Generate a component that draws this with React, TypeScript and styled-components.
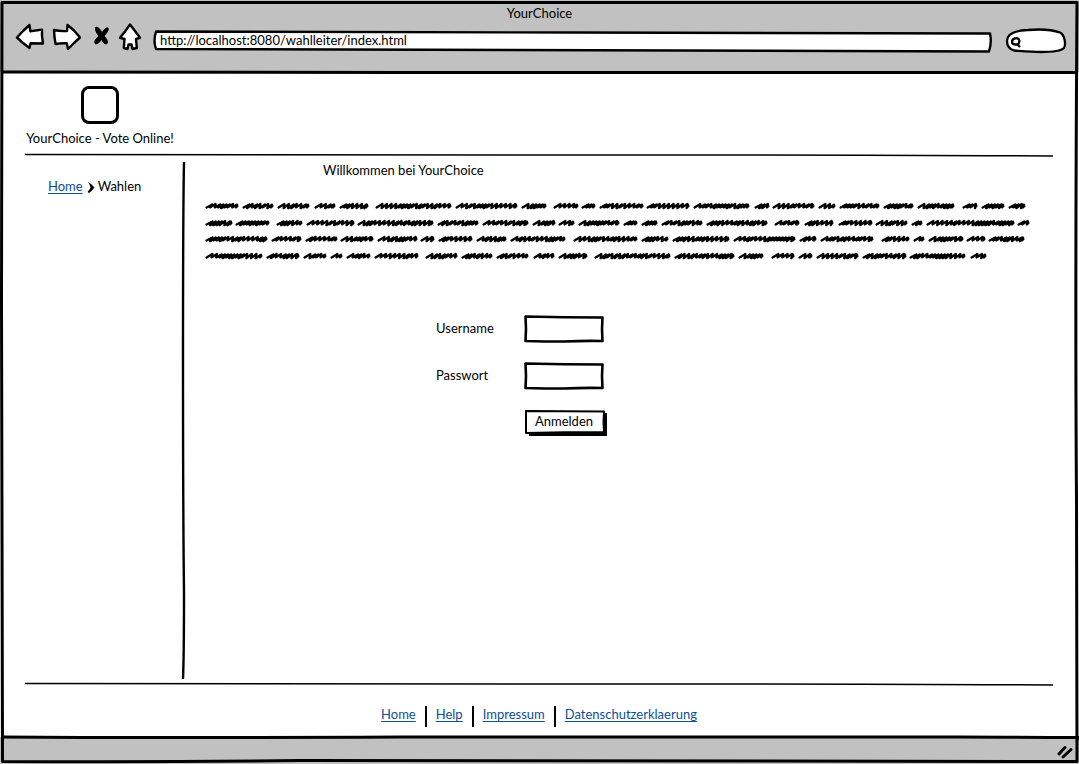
import React from "react";
import styled, { createGlobalStyle } from "styled-components";

const GlobalStyle = createGlobalStyle`
  * { box-sizing: border-box; }
  body {
    margin: 0;
    background: #fff;
    color: #000;
    font-family: Lato, "Open Sans", sans-serif;
    font-size: 13px;
    line-height: 16px;
  }
`;

const Window = styled.div`
  position: relative;
  display: flex;
  flex-direction: column;
  min-height: 100vh;
`;

const Outline = styled.svg`
  position: absolute;
  inset: 0;
  width: 100%;
  height: 100%;
  fill: none;
  stroke: #000;
  pointer-events: none;
  path { vector-effect: non-scaling-stroke; }
`;

const Toolbar = styled.header`
  display: flex;
  flex-direction: column;
  padding-top: 5px;
  background: #c1c1c1;
`;

const WindowTitle = styled.div`
  height: 15px;
  text-align: center;
`;

const NavRow = styled.div`
  display: flex;
  align-items: flex-end;
  padding: 0 12px 15px 14px;
`;

const NavButtons = styled.div`
  display: flex;
  gap: 2px;
  margin-right: 9px;
`;

const IconButton = styled.button`
  display: block;
  padding: 0;
  border: 0;
  background: none;
  svg {
    display: block;
    fill: #fff;
    stroke: #000;
    stroke-width: 2.4;
    stroke-linejoin: round;
    stroke-linecap: round;
  }
`;

const Field = styled.div<{ $width?: number; $height: number }>`
  position: relative;
  flex: ${(p) => (p.$width ? "none" : "1")};
  width: ${(p) => (p.$width ? `${p.$width}px` : "auto")};
  height: ${(p) => p.$height}px;
`;

const TextInput = styled.input<{ $padLeft?: number }>`
  position: relative;
  display: block;
  width: 100%;
  height: 100%;
  padding: 0 6px 4px ${(p) => p.$padLeft ?? 7}px;
  border: 0;
  outline: 0;
  background: transparent;
  color: #000;
  font: inherit;
`;

const SearchSlot = styled.div`
  margin-left: 13px;
`;

const Rule = styled.svg`
  display: block;
  flex: none;
  width: 100%;
  height: 6px;
  fill: none;
  stroke: #000;
  path { vector-effect: non-scaling-stroke; }
`;

const TopRule = styled(Rule)`
  background: linear-gradient(#c1c1c1 50%, #fff 50%);
`;

const BottomRule = styled(Rule)`
  background: linear-gradient(#fff 50%, #c1c1c1 50%);
`;

const Page = styled.div`
  display: flex;
  flex: 1;
  flex-direction: column;
  padding: 0 26px 0 25px;
`;

const Brand = styled.div`
  display: flex;
  flex-direction: column;
  align-items: center;
  gap: 6px;
  width: 150px;
  padding: 11px 0 6px;
  white-space: nowrap;
`;

const Logo = styled.div`
  width: 38px;
  height: 38px;
  border: 3px solid #000;
  border-radius: 8px;
`;

const Columns = styled.div`
  display: flex;
  flex: 1;
`;

const Breadcrumb = styled.nav`
  display: flex;
  align-items: flex-start;
  width: 155px;
  padding: 20px 0 0 23px;
  svg { margin: 4px 3px 0 4px; }
`;

const Link = styled.a`
  color: #0b4f94;
  text-decoration: underline;
  text-decoration-thickness: 1px;
  text-decoration-skip-ink: none;
  text-underline-offset: 2px;
`;

const Divider = styled.div`
  position: relative;
  width: 6px;
  margin: 4px 0 2px;
`;

const Main = styled.main`
  flex: 1;
  padding: 4px 23px 0 19px;
`;

const Heading = styled.h1`
  margin: 0 0 21px;
  padding-left: 118px;
  font-size: 13px;
  font-weight: 400;
  line-height: 16px;
`;

const Scribble = styled.svg`
  display: block;
  width: 100%;
  height: auto;
  fill: none;
  stroke: #000;
  stroke-width: 2.3;
  stroke-linecap: round;
  stroke-linejoin: round;
`;

const LoginForm = styled.form`
  display: grid;
  grid-template-columns: 88px 80px;
  row-gap: 19px;
  align-items: center;
  margin: 52px 0 0 231px;
  label { padding-bottom: 2px; }
`;

const SubmitButton = styled.button`
  position: relative;
  grid-column: 2;
  width: 83px;
  height: 27px;
  padding: 0 3px 3px 0;
  border: 0;
  background: none;
  color: #000;
  font: inherit;
  white-space: nowrap;
  span { position: relative; }
`;

const Footer = styled.footer`
  display: flex;
  justify-content: center;
  padding: 19px 0 7px;
`;

const FooterLinks = styled.nav`
  display: flex;
  align-items: flex-start;
  height: 21px;
`;

const Separator = styled.span`
  width: 2px;
  height: 21px;
  margin: 0 9px;
  background: #000;
`;

const StatusBar = styled.div`
  display: flex;
  justify-content: flex-end;
  align-items: center;
  height: 24px;
  padding-right: 5px;
  background: #c1c1c1;
`;

const scribbleLines: number[][] = [
  [206, 238, 243, 273, 278, 309, 315, 335, 340, 368, 376, 451, 456, 517, 522, 546, 554, 578, 582, 595, 600, 643, 647, 689, 694, 749, 755, 769, 773, 814, 819, 835, 840, 879, 884, 913, 918, 954, 963, 977, 982, 1004, 1009, 1025],
  [206, 232, 236, 269, 277, 302, 307, 354, 358, 433, 438, 478, 483, 528, 533, 555, 559, 574, 579, 619, 624, 637, 642, 657, 662, 702, 707, 767, 775, 799, 805, 833, 839, 872, 876, 907, 912, 922, 927, 1014, 1018, 1029],
  [206, 267, 272, 301, 306, 337, 341, 373, 378, 417, 421, 434, 439, 472, 477, 506, 511, 565, 574, 637, 642, 668, 673, 729, 734, 795, 800, 816, 821, 873, 882, 909, 914, 924, 929, 963, 967, 985, 989, 1024],
  [206, 262, 267, 299, 304, 326, 331, 342, 347, 370, 375, 418, 426, 457, 462, 492, 497, 528, 534, 554, 559, 587, 595, 670, 675, 734, 739, 763, 772, 794, 799, 812, 817, 858, 863, 906, 910, 965, 971, 986],
];

// One word: a run of slanted up-strokes whose spacing changes between tight and loose.
function scribbleWord(start: number, end: number, y: number) {
  let seed = start * 31 + y * 17;
  const next = () => {
    seed = (seed * 1103 + 12345) % 65536;
    return seed / 65536;
  };
  const last = end - 206;
  let x = start - 204;
  let loose = next() < 0.5;
  let d = `M${x - 0.4} ${y + 1.5}`;
  while (x + 5.5 < last) {
    if (next() < 0.4) loose = !loose;
    const step = loose ? 4.6 : 3.2;
    const rise = loose ? 2 : 1.6;
    const drop = next() < 0.5 ? 2.2 : 1.4;
    d += `L${(x + 5.4).toFixed(1)} ${(y - rise).toFixed(1)}L${(x + step).toFixed(1)} ${(y + drop).toFixed(1)}`;
    x += step;
  }
  return `${d}L${last} ${y - 1.4}L${last - 1} ${y + 1.4}L${last + 0.4} ${y}`;
}

const scribblePath = scribbleLines
  .map((line, row) => {
    const y = [7, 24, 40, 57][row];
    let d = "";
    for (let i = 0; i < line.length; i += 2) d += scribbleWord(line[i], line[i + 1], y);
    return d;
  })
  .join("");

function LoginInput({ id, type }: { id: string; type: string }) {
  return (
    <Field $width={80} $height={28}>
      <Outline viewBox="0 0 80 28" preserveAspectRatio="none" strokeWidth="2.6" strokeLinejoin="round">
        <path d="M1.5 1.5Q40 2.5 78.5 2.5Q77.5 14 78.5 26Q60 25.5 40 26.5Q20 26.5 1.5 26Q2.5 14 1.5 1.5Z" />
      </Outline>
      <TextInput id={id} type={type} />
    </Field>
  );
}

export default function App() {
  return (
    <Window>
      <GlobalStyle />
      <Toolbar>
        <WindowTitle>YourChoice</WindowTitle>
        <NavRow>
          <NavButtons>
            <IconButton type="button" aria-label="Back">
              <svg width="34" height="34" viewBox="14 20 34 34">
                <path d="M17 37.5L23 31L29.5 25L30.3 31.2L42 29.6L42 36L43 43.5L30.5 43.3L29.5 48L23 43Z" />
              </svg>
            </IconButton>
            <IconButton type="button" aria-label="Forward">
              <svg width="34" height="34" viewBox="50 20 34 34">
                <path d="M54 30Q60 31.5 67 31L67.5 25L74 30.5L80 37.5L74 43L68 49L66.8 43.3Q60 43 55.5 44L54.5 37Z" />
              </svg>
            </IconButton>
            <IconButton type="button" aria-label="Stop">
              <svg width="28" height="34" viewBox="86 20 28 34">
                <path
                  d="M96 27.3Q99 26.5 102 33Q105 27 108 28Q109.5 30 104 36Q108 40 107.5 43Q105 46 101.5 39.5Q98 44.5 95.5 44Q93 41 99 36Q94 30 96 27.3Z"
                  fill="#000"
                  strokeWidth="1"
                />
              </svg>
            </IconButton>
            <IconButton type="button" aria-label="Home">
              <svg width="28" height="34" viewBox="116 20 28 34">
                <path d="M130 24.5L135 31L140 37.8L136 39L136.8 48L132.5 49L131.5 44.5L128.5 44.5L127.5 49L123.8 48L124.5 39L120 37.8L125 31.5Z" />
              </svg>
            </IconButton>
          </NavButtons>
          <Field $height={24}>
            <Outline viewBox="0 0 838 24" preserveAspectRatio="none" strokeWidth="2.4" strokeLinejoin="round">
              <path fill="#fff" d="M3 1.5Q200 2 420 2.5Q640 2.5 836 3.5Q838 12 835 21.5Q400 20 3 19Q0 11 3 1.5Z" />
            </Outline>
            <TextInput aria-label="Address" defaultValue="http://localhost:8080/wahlleiter/index.html" />
          </Field>
          <SearchSlot>
            <Field $width={62} $height={26}>
              <Outline viewBox="1005 28 62 26" strokeWidth="2.3" strokeLinejoin="round">
                <path
                  fill="#fff"
                  d="M1007 41C1007 34 1015 30.5 1028 30C1040 29 1053 30 1060 32.5C1065 35 1066 45 1064 48C1060 52 1049 52 1041 52C1031 52 1021 51 1014 50.5C1009 49 1007 45 1007 41Z"
                />
                <path d="M1018.5 39C1016 37 1012 39 1012 42C1012 45 1017 45 1018.5 43.5C1019.5 42 1019.5 40 1018.5 39ZM1017 44L1020 47" />
              </Outline>
              <TextInput type="search" aria-label="Search" $padLeft={18} />
            </Field>
          </SearchSlot>
        </NavRow>
      </Toolbar>
      <TopRule viewBox="0 0 1079 6" preserveAspectRatio="none" strokeWidth="3">
        <path d="M3 3Q150 4 400 3.5T1076 3.5" />
      </TopRule>

      <Page>
        <Brand>
          <Logo />
          <div>YourChoice - Vote Online!</div>
        </Brand>
        <Rule viewBox="0 0 1028 6" preserveAspectRatio="none" strokeWidth="1.5">
          <path d="M0 2.4Q300 3.5 560 3T1028 4" />
        </Rule>
        <Columns>
          <Breadcrumb aria-label="Breadcrumb">
            <Link href="#home">Home</Link>
            <svg width="8" height="11" viewBox="0 0 8 11" aria-hidden="true">
              <path d="M1 0Q5 2 7.500 5.500Q5 9 2 11L0.500 10Q3 7 3.500 5.500Q3 3 1 0Z" />
            </svg>
            <span>Wahlen</span>
          </Breadcrumb>
          <Divider>
            <Outline viewBox="0 0 6 518" preserveAspectRatio="none" strokeWidth="2.4">
              <path d="M4 0Q3 50 3 200T4 430Q4 495 3 518" />
            </Outline>
          </Divider>
          <Main>
            <Heading>Willkommen bei YourChoice</Heading>
            <Scribble viewBox="0 0 825 64" aria-hidden="true">
              <path d={scribblePath} />
            </Scribble>
            <LoginForm onSubmit={(e) => e.preventDefault()}>
              <label htmlFor="username">Username</label>
              <LoginInput id="username" type="text" />
              <label htmlFor="password">Passwort</label>
              <LoginInput id="password" type="password" />
              <SubmitButton type="submit">
                <Outline viewBox="0 0 83 27" preserveAspectRatio="none" strokeLinejoin="round">
                  <path d="M5 4H83V27H5Z" fill="#000" stroke="none" />
                  <path d="M2 2L80 2.5L79.5 13L80 23Q40 23 2 24Z" fill="#fff" strokeWidth="2" />
                </Outline>
                <span>Anmelden</span>
              </SubmitButton>
            </LoginForm>
          </Main>
        </Columns>
        <Rule viewBox="0 0 1028 6" preserveAspectRatio="none" strokeWidth="1.5">
          <path d="M0 2.4Q300 3.5 560 3T1028 4" />
        </Rule>
        <Footer>
          <FooterLinks aria-label="Footer">
            <Link href="#home">Home</Link>
            <Separator />
            <Link href="#help">Help</Link>
            <Separator />
            <Link href="#impressum">Impressum</Link>
            <Separator />
            <Link href="#datenschutz">Datenschutzerklaerung</Link>
          </FooterLinks>
        </Footer>
      </Page>

      <BottomRule viewBox="0 0 1079 6" preserveAspectRatio="none" strokeWidth="3">
        <path d="M3 3Q150 4 400 3T960 3T1076 5" />
      </BottomRule>
      <StatusBar>
        <svg width="18" height="16" viewBox="1056 743 18 16" aria-hidden="true" stroke="#000" strokeWidth="3" strokeLinecap="round">
          <path d="M1059 753L1065 746.5M1063 756L1071 748.5" />
        </svg>
      </StatusBar>
      <Outline viewBox="0 0 1079 764" preserveAspectRatio="none" strokeWidth="3" strokeLinejoin="round">
        <path d="M2 2.5Q500 1.5 1077 2.5Q1075 300 1076.5 500L1077 761.5Q500 760 300 760.5Q150 762.5 2.5 761.5Q2 500 1.5 300Z" />
      </Outline>
    </Window>
  );
}
